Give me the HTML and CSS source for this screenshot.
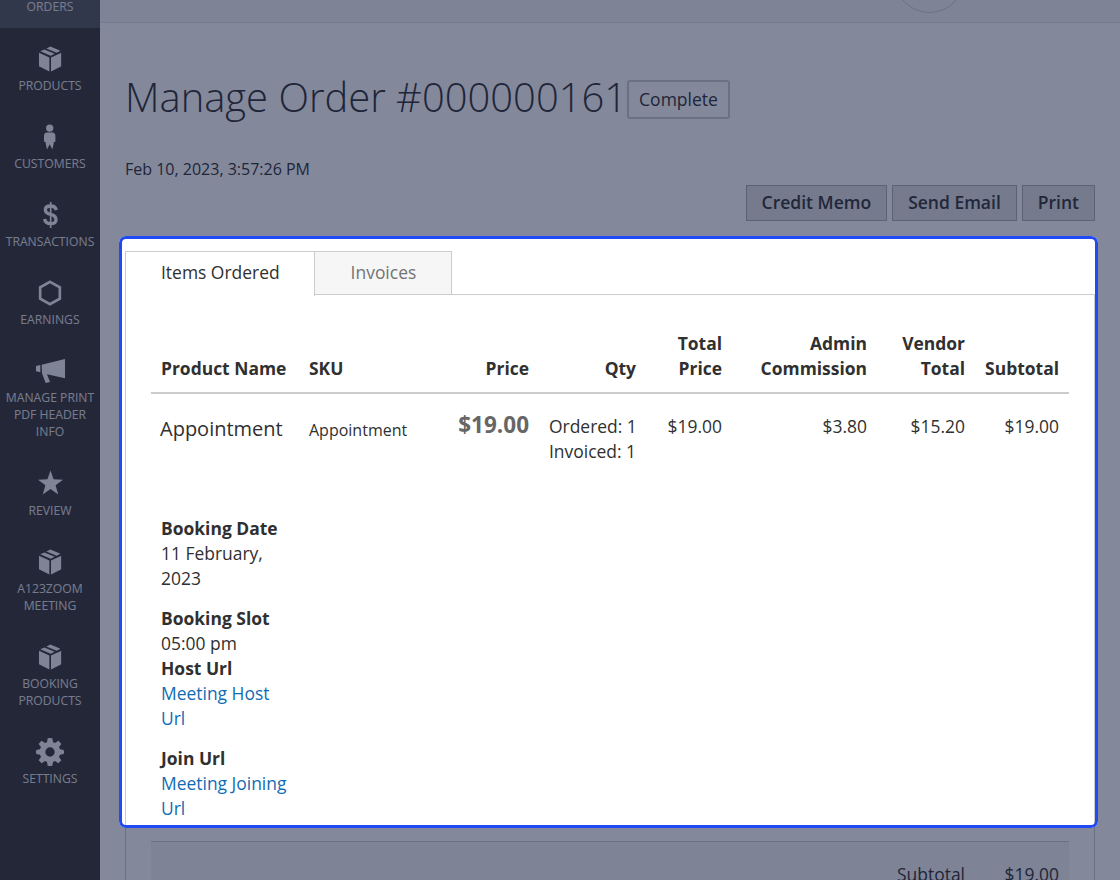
FILE: index.html
```html
<!DOCTYPE html>
<html lang="en">
<head>
  <meta charset="UTF-8" />
  <meta name="viewport" content="width=device-width, initial-scale=1.0" />
  <title>Manage Order #000000161</title>
  <link rel="stylesheet" href="styles.css">
</head>
<body>
  <svg class="sprite">
    <symbol id="box" viewBox="0 0 67 75">
      <path d="M34 0L64 13L53 19L22 6ZM16 9L47 22L35 28L4 14ZM0 19L31 33V75L0 59ZM36 33L67 19V59L36 75Z" />
    </symbol>
  </svg>

  <div class="page">
    <nav class="sidebar">
      <a class="item active"><span>Orders</span></a>
      <a class="item">
        <svg width="22.4" height="25"><use href="#box" /></svg>
        <span>Products</span>
      </a>
      <a class="item">
        <svg class="person" width="11.4" height="25" viewBox="0 0 34 75"><circle cx="17" cy="11" r="11" /><path d="M9 24H25Q34 25 34 34V50Q32 54 29 52V57L25 75L17 59L9 75L5 57V52Q2 54 0 50V34Q0 25 9 24Z" /></svg>
        <span>Customers</span>
      </a>
      <a class="item">
        <svg class="dollar" width="15" height="26" viewBox="0 0 45 78"><path d="M40 24Q37 12 23 12Q7 12 7 23Q7 33 23 37Q39 41 39 53Q39 65 23 65Q7 65 5 51" fill="none" stroke="currentColor" stroke-width="10" /><path d="M20.500 0H25.500V78H20.500Z" /></svg>
        <span>Transactions</span>
      </a>
      <a class="item">
        <svg width="22" height="25" viewBox="0 0 66 75"><path d="M33 4L62.500 20.500V54.500L33 71L3.500 54.500V20.500Z" fill="none" stroke="currentColor" stroke-width="8" /></svg>
        <span>Earnings</span>
      </a>
      <a class="item">
        <svg class="horn" width="29" height="24" viewBox="0 0 87 72"><path d="M0 21L13 18V40L0 37ZM17 17L87 0V58L33 46L42 69L29 72L18 43Z" /></svg>
        <span>Manage Print PDF Header Info</span>
      </a>
      <a class="item">
        <svg class="star" width="25" height="24" viewBox="0 0 74 71"><path d="M37 0L46 26L74 27L52 44L60 71L37 55L14 71L22 44L0 27L28 26Z" /></svg>
        <span>Review</span>
      </a>
      <a class="item">
        <svg width="22.4" height="25"><use href="#box" /></svg>
        <span>A123Zoom Meeting</span>
      </a>
      <a class="item">
        <svg width="22.4" height="25"><use href="#box" /></svg>
        <span>Booking Products</span>
      </a>
      <a class="item">
        <svg width="28" height="28" viewBox="0 0 84 84"><path fill-rule="evenodd" d="M35 1Q42 -1 49 1L51 13L57 15L67 8Q72 12 76 18L69 27L72 34L83 36Q85 42 83 48L72 50L69 57L76 67Q72 72 67 76L57 69L51 72L49 83Q42 85 35 83L33 72L27 69L17 76Q12 72 8 67L15 57L12 50L1 48Q-1 42 1 36L12 34L15 27L8 18Q12 12 17 8L27 15L33 13ZM42 28A14 14 0 1 0 42 56A14 14 0 1 0 42 28Z" /></svg>
        <span>Settings</span>
      </a>
    </nav>

    <main class="main">
      <header class="topbar"><div class="avatar"></div></header>

      <div class="content">
        <div class="title-row">
          <h1>Manage Order #000000161</h1>
          <span class="status">Complete</span>
        </div>
        <div class="date">Feb 10, 2023, 3:57:26 PM</div>
        <div class="actions">
          <button>Credit Memo</button>
          <button>Send Email</button>
          <button>Print</button>
        </div>

        <div class="tabs">
          <a class="tab current">Items Ordered</a>
          <a class="tab">Invoices</a>
        </div>
        <section class="panel">
          <table>
            <colgroup>
              <col class="c-name"><col class="c-sku"><col class="c-price"><col class="c-qty">
              <col class="c-total"><col class="c-admin"><col class="c-vendor"><col class="c-sub">
            </colgroup>
            <thead>
              <tr>
                <th class="left">Product Name</th>
                <th class="left">SKU</th>
                <th>Price</th>
                <th>Qty</th>
                <th>Total Price</th>
                <th>Admin Commission</th>
                <th>Vendor Total</th>
                <th>Subtotal</th>
              </tr>
            </thead>
            <tbody>
              <tr class="product">
                <td class="left name">Appointment</td>
                <td class="left sku">Appointment</td>
                <td class="price">$19.00</td>
                <td class="qty">Ordered: 1<br>Invoiced: 1</td>
                <td>$19.00</td>
                <td>$3.80</td>
                <td>$15.20</td>
                <td>$19.00</td>
              </tr>
              <tr class="options">
                <td class="left">
                  <dl>
                    <dt>Booking Date</dt>
                    <dd class="spaced">11 February, 2023</dd>
                    <dt>Booking Slot</dt>
                    <dd>05:00 pm</dd>
                    <dt>Host Url</dt>
                    <dd class="spaced"><a>Meeting Host Url</a></dd>
                    <dt>Join Url</dt>
                    <dd><a>Meeting Joining Url</a></dd>
                  </dl>
                </td>
                <td colspan="7"></td>
              </tr>
            </tbody>
          </table>
          <div class="totals">
            <span>Subtotal</span>
            <span class="amount">$19.00</span>
          </div>
        </section>
      </div>
    </main>
    <div class="spotlight"></div>
  </div>
</body>
</html>
```

FILE: styles.css
```css
* {
  margin: 0;
  padding: 0;
  box-sizing: border-box;
}

body {
  background: #fff;
  color: #303030;
  font-family: "Open Sans", sans-serif;
  font-size: 17.45px;
  line-height: 25px;
}

.sprite {
  display: none;
}

.page {
  position: relative;
  display: flex;
  width: 1120px;
  height: 880px;
  overflow: hidden;
}

/* sidebar */
.sidebar {
  width: 100px;
  flex: none;
  background: #373330;
}

.item {
  display: flex;
  flex-direction: column;
  align-items: center;
  padding: 0 4px 12px;
  color: #f5f5f2;
  font-size: 12.2px;
  line-height: 17px;
  text-align: center;
  text-transform: uppercase;
}

.item span {
  color: #e4e5e3;
}

.item svg {
  fill: currentColor;
  overflow: visible;
}

.item:not(.active)::before {
  content: "";
  height: 11.1px;
}

.item:not(.active) svg {
  height: 38px;
  padding-top: 2px;
}

.item:not(.active) .star {
  padding: 0 0 1px;
}

.item.active {
  height: 28px;
  background: #56585a;
  justify-content: flex-end;
  padding-bottom: 13px;
}

/* page header */
.main {
  flex: 1;
  min-width: 0;
}

.topbar {
  display: flex;
  justify-content: flex-end;
  align-items: flex-end;
  height: 23px;
  padding: 0 155px 9px 0;
  background: #f5f5f5;
  border-bottom: 1px solid #e3e3e3;
}

.avatar {
  flex: none;
  width: 71px;
  height: 71px;
  border: 1px solid #ccc;
  border-radius: 50%;
}

.content {
  padding: 41px 25px 0;
}

.title-row {
  display: flex;
  align-items: center;
  height: 64px;
}

h1 {
  font-size: 39.95px;
  font-weight: 300;
  line-height: 61px;
  white-space: nowrap;
}

.status {
  height: 39px;
  margin-top: 7px;
  padding: 5px 10px;
  border: 2px solid #ccc;
  border-radius: 3px;
  font-size: 17.5px;
}

.date {
  margin-top: 29px;
  font-size: 16px;
}

.actions {
  display: flex;
  justify-content: flex-end;
  gap: 5px;
  margin-top: 3px;
}

button {
  height: 36px;
  padding: 0 15px 2px;
  background: #e1e1e1;
  border: 1px solid #adadad;
  color: #333;
  font: 600 17.5px "Open Sans", sans-serif;
}

/* tabs */
.tabs {
  display: flex;
  margin-top: 30px;
}

.tab {
  height: 44px;
  padding: 8px 35px;
  background: #f6f6f6;
  border: 1px solid #ccc;
  border-left: 0;
  color: #737373;
}

.tab.current {
  margin-bottom: -1px;
  height: 45px;
  padding-right: 34px;
  border-left: 1px solid #ccc;
  border-bottom: 0;
  background: #fff;
  color: #303030;
  z-index: 1;
}

.tab:last-child {
  padding-left: 36px;
}

.panel {
  margin-top: -1px;
  height: 640px;
  padding: 26px 25px;
  border: 1px solid #ccc;
}

table {
  width: 918px;
  table-layout: fixed;
  border-collapse: separate;
  border-spacing: 0;
}

.c-name { width: 148px; }
.c-sku { width: 149px; }
.c-price { width: 91px; }
.c-qty { width: 107px; }
.c-total { width: 86px; }
.c-admin { width: 145px; }
.c-vendor { width: 98px; }
.c-sub { width: 94px; }

th {
  padding: 10px 10px 11px;
  border-bottom: 2px solid #ccc;
  font-weight: 700;
  text-align: right;
  vertical-align: bottom;
}

td {
  padding: 20px 10px 0;
  text-align: right;
  vertical-align: top;
}

.left {
  text-align: left;
}

.name {
  padding: 22px 0 0 9px;
  font-size: 20px;
}

.sku {
  padding-top: 24px;
  font-size: 16px;
}

.price {
  padding-top: 18px;
  color: #666;
  font-size: 22.5px;
  font-weight: 700;
}

.qty {
  white-space: nowrap;
}

.options td {
  padding-top: 52px;
}

dt {
  font-weight: 700;
}

.spaced {
  margin-bottom: 15px;
}

dl a {
  color: #126cb4;
}

.totals {
  display: flex;
  justify-content: flex-end;
  height: 100px;
  margin-top: 20px;
  padding: 20px 10px;
  background: #f5f5f5;
  border-top: 1px solid #ccc;
}

.amount {
  width: 94px;
  text-align: right;
}

/* highlighted area, dims everything around it */
.spotlight {
  position: absolute;
  left: 119px;
  top: 236px;
  width: 979px;
  height: 592px;
  border: 3px solid #2149f5;
  border-radius: 7px;
  box-shadow: 0 0 0 1200px rgba(19, 28, 65, 0.525);
  z-index: 2;
}
```
